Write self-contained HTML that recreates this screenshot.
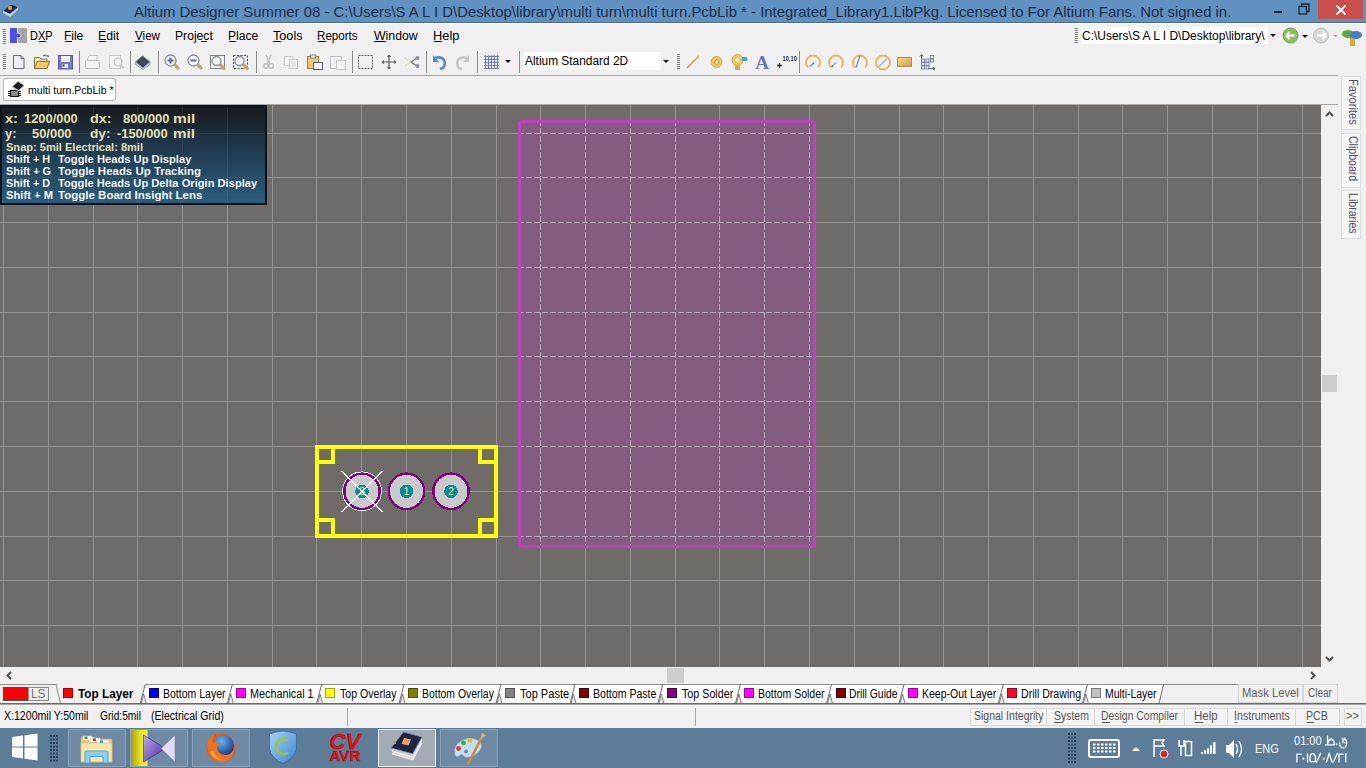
<!DOCTYPE html>
<html><head><meta charset="utf-8">
<style>
*{margin:0;padding:0;box-sizing:border-box}
html,body{width:1366px;height:768px;overflow:hidden;background:#f0f0f0;font-family:"Liberation Sans", sans-serif}
.a{position:absolute}
.t{position:absolute;white-space:nowrap;line-height:1}
.vt{position:absolute;left:1341px;width:20px;background:#f7f7f7;border:1px solid #dcdcdc}
</style></head><body>
<svg class="a" style="left:0;top:0" width="1366" height="768">
<defs>
<pattern id="hatch" patternUnits="userSpaceOnUse" width="5.657" height="8" patternTransform="rotate(-45)">
<rect x="0" y="0" width="6" height="8" fill="#6f6b69"/>
<rect x="0" y="0" width="2.9" height="8" fill="#964e96"/>
</pattern>
<linearGradient id="hudg" x1="0" y1="0" x2="0" y2="1">
<stop offset="0" stop-color="#18191b"/>
<stop offset="0.35" stop-color="#1e3446"/>
<stop offset="1" stop-color="#2b5d7d"/>
</linearGradient>
</defs>
<g shape-rendering="crispEdges">
<rect x="0" y="105" width="1321" height="562" fill="#6f6b69"/>
<rect x="518" y="120" width="298" height="428" fill="url(#hatch)"/>
<rect x="3" y="105" width="1" height="562" fill="#949190"/>
<rect x="48" y="105" width="1" height="562" fill="#949190"/>
<rect x="93" y="105" width="1" height="562" fill="#949190"/>
<rect x="137" y="105" width="1" height="562" fill="#949190"/>
<rect x="182" y="105" width="1" height="562" fill="#949190"/>
<rect x="227" y="105" width="1" height="562" fill="#949190"/>
<rect x="272" y="105" width="1" height="562" fill="#949190"/>
<rect x="316" y="105" width="1" height="562" fill="#949190"/>
<rect x="361" y="105" width="1" height="562" fill="#949190"/>
<rect x="406" y="105" width="1" height="562" fill="#949190"/>
<rect x="451" y="105" width="1" height="562" fill="#949190"/>
<rect x="496" y="105" width="1" height="562" fill="#949190"/>
<rect x="540" y="105" width="1" height="15" fill="#949190"/>
<line x1="540.5" y1="120" x2="540.5" y2="548" stroke="#b9a3b9" stroke-width="1" stroke-dasharray="6 2"/>
<rect x="540" y="548" width="1" height="119" fill="#949190"/>
<rect x="585" y="105" width="1" height="15" fill="#949190"/>
<line x1="585.5" y1="120" x2="585.5" y2="548" stroke="#b9a3b9" stroke-width="1" stroke-dasharray="6 2"/>
<rect x="585" y="548" width="1" height="119" fill="#949190"/>
<rect x="630" y="105" width="1" height="15" fill="#949190"/>
<line x1="630.5" y1="120" x2="630.5" y2="548" stroke="#b9a3b9" stroke-width="1" stroke-dasharray="6 2"/>
<rect x="630" y="548" width="1" height="119" fill="#949190"/>
<rect x="675" y="105" width="1" height="15" fill="#949190"/>
<line x1="675.5" y1="120" x2="675.5" y2="548" stroke="#b9a3b9" stroke-width="1" stroke-dasharray="6 2"/>
<rect x="675" y="548" width="1" height="119" fill="#949190"/>
<rect x="719" y="105" width="1" height="15" fill="#949190"/>
<line x1="719.5" y1="120" x2="719.5" y2="548" stroke="#b9a3b9" stroke-width="1" stroke-dasharray="6 2"/>
<rect x="719" y="548" width="1" height="119" fill="#949190"/>
<rect x="764" y="105" width="1" height="15" fill="#949190"/>
<line x1="764.5" y1="120" x2="764.5" y2="548" stroke="#b9a3b9" stroke-width="1" stroke-dasharray="6 2"/>
<rect x="764" y="548" width="1" height="119" fill="#949190"/>
<rect x="809" y="105" width="1" height="15" fill="#949190"/>
<line x1="809.5" y1="120" x2="809.5" y2="548" stroke="#b9a3b9" stroke-width="1" stroke-dasharray="6 2"/>
<rect x="809" y="548" width="1" height="119" fill="#949190"/>
<rect x="854" y="105" width="1" height="562" fill="#949190"/>
<rect x="899" y="105" width="1" height="562" fill="#949190"/>
<rect x="943" y="105" width="1" height="562" fill="#949190"/>
<rect x="988" y="105" width="1" height="562" fill="#949190"/>
<rect x="1033" y="105" width="1" height="562" fill="#949190"/>
<rect x="1078" y="105" width="1" height="562" fill="#949190"/>
<rect x="1122" y="105" width="1" height="562" fill="#949190"/>
<rect x="1167" y="105" width="1" height="562" fill="#949190"/>
<rect x="1212" y="105" width="1" height="562" fill="#949190"/>
<rect x="1257" y="105" width="1" height="562" fill="#949190"/>
<rect x="1302" y="105" width="1" height="562" fill="#949190"/>
<rect x="0" y="133" width="518" height="1" fill="#949190"/>
<line x1="518" y1="133.5" x2="816" y2="133.5" stroke="#b9a3b9" stroke-width="1" stroke-dasharray="6 2"/>
<rect x="816" y="133" width="505" height="1" fill="#949190"/>
<rect x="0" y="177" width="518" height="1" fill="#949190"/>
<line x1="518" y1="177.5" x2="816" y2="177.5" stroke="#b9a3b9" stroke-width="1" stroke-dasharray="6 2"/>
<rect x="816" y="177" width="505" height="1" fill="#949190"/>
<rect x="0" y="222" width="518" height="1" fill="#949190"/>
<line x1="518" y1="222.5" x2="816" y2="222.5" stroke="#b9a3b9" stroke-width="1" stroke-dasharray="6 2"/>
<rect x="816" y="222" width="505" height="1" fill="#949190"/>
<rect x="0" y="267" width="518" height="1" fill="#949190"/>
<line x1="518" y1="267.5" x2="816" y2="267.5" stroke="#b9a3b9" stroke-width="1" stroke-dasharray="6 2"/>
<rect x="816" y="267" width="505" height="1" fill="#949190"/>
<rect x="0" y="312" width="518" height="1" fill="#949190"/>
<line x1="518" y1="312.5" x2="816" y2="312.5" stroke="#b9a3b9" stroke-width="1" stroke-dasharray="6 2"/>
<rect x="816" y="312" width="505" height="1" fill="#949190"/>
<rect x="0" y="356" width="518" height="1" fill="#949190"/>
<line x1="518" y1="356.5" x2="816" y2="356.5" stroke="#b9a3b9" stroke-width="1" stroke-dasharray="6 2"/>
<rect x="816" y="356" width="505" height="1" fill="#949190"/>
<rect x="0" y="401" width="518" height="1" fill="#949190"/>
<line x1="518" y1="401.5" x2="816" y2="401.5" stroke="#b9a3b9" stroke-width="1" stroke-dasharray="6 2"/>
<rect x="816" y="401" width="505" height="1" fill="#949190"/>
<rect x="0" y="446" width="518" height="1" fill="#949190"/>
<line x1="518" y1="446.5" x2="816" y2="446.5" stroke="#b9a3b9" stroke-width="1" stroke-dasharray="6 2"/>
<rect x="816" y="446" width="505" height="1" fill="#949190"/>
<rect x="0" y="491" width="518" height="1" fill="#949190"/>
<line x1="518" y1="491.5" x2="816" y2="491.5" stroke="#b9a3b9" stroke-width="1" stroke-dasharray="6 2"/>
<rect x="816" y="491" width="505" height="1" fill="#949190"/>
<rect x="0" y="536" width="518" height="1" fill="#949190"/>
<line x1="518" y1="536.5" x2="816" y2="536.5" stroke="#b9a3b9" stroke-width="1" stroke-dasharray="6 2"/>
<rect x="816" y="536" width="505" height="1" fill="#949190"/>
<rect x="0" y="580" width="1321" height="1" fill="#949190"/>
<rect x="0" y="625" width="1321" height="1" fill="#949190"/>
<rect x="519.5" y="121.5" width="295" height="425" rx="2" fill="none" stroke="#c23ec2" stroke-width="3"/>
<g fill="#ffff00"><rect x="315" y="445" width="183" height="4"/><rect x="315" y="534" width="183" height="4"/><rect x="315" y="445" width="4" height="93"/><rect x="494" y="445" width="4" height="93"/><rect x="331" y="445" width="4" height="19"/><rect x="315" y="460" width="20" height="4"/><rect x="478" y="445" width="4" height="19"/><rect x="478" y="460" width="20" height="4"/><rect x="331" y="518" width="4" height="20"/><rect x="315" y="518" width="20" height="4"/><rect x="478" y="518" width="4" height="20"/><rect x="478" y="518" width="20" height="4"/></g>
<circle cx="362" cy="491.3" r="19.3" fill="none" stroke="#ffffff" stroke-width="1.2"/>
<circle cx="362" cy="491.3" r="17.7" fill="#c9c8ca" stroke="#800080" stroke-width="2.4"/>
<circle cx="362" cy="491.3" r="6.8" fill="#0c8c90"/>
<text x="362" y="494.90000000000003" font-family="Liberation Sans" font-size="10" fill="#e6f0b0" text-anchor="middle">3</text>
<g stroke="#ffffff" stroke-width="1.1"><line x1="341.5" y1="470.8" x2="382.5" y2="511.8"/><line x1="382.5" y1="470.8" x2="341.5" y2="511.8"/></g>
<circle cx="406.5" cy="491.3" r="17.7" fill="#c9c8ca" stroke="#800080" stroke-width="2.4"/>
<circle cx="406.5" cy="491.3" r="6.8" fill="#0c8c90"/>
<text x="406.5" y="494.90000000000003" font-family="Liberation Sans" font-size="10" fill="#e6f0b0" text-anchor="middle">1</text>
<circle cx="451" cy="491.3" r="17.7" fill="#c9c8ca" stroke="#800080" stroke-width="2.4"/>
<circle cx="451" cy="491.3" r="6.8" fill="#0c8c90"/>
<text x="451" y="494.90000000000003" font-family="Liberation Sans" font-size="10" fill="#e6f0b0" text-anchor="middle">2</text>
</g>
</svg>

<svg class="a" style="left:0;top:105px" width="267" height="100">
<rect x="0" y="0" width="267" height="100" fill="#0b141c"/>
<rect x="2" y="2" width="263" height="96" fill="url(#hudg)"/><g fill="#ffffff" opacity="0.07"><rect x="48" y="2" width="1" height="96"/><rect x="93" y="2" width="1" height="96"/><rect x="137" y="2" width="1" height="96"/><rect x="182" y="2" width="1" height="96"/><rect x="227" y="2" width="1" height="96"/><rect x="2" y="28" width="263" height="1"/><rect x="2" y="72" width="263" height="1"/></g>
</svg>
<div class="t" style="left:4.79px;top:111.79px;font-size:13px;color:#e4e0b4;font-weight:bold;transform:scaleX(1.1171);transform-origin:0 0;">x:</div>
<div class="t" style="left:24.39px;top:111.79px;font-size:13px;color:#e4e0b4;font-weight:bold;transform:scaleX(0.9910);transform-origin:0 0;">1200/000</div>
<div class="t" style="left:90.32px;top:111.79px;font-size:13px;color:#e4e0b4;font-weight:bold;transform:scaleX(1.1102);transform-origin:0 0;">dx:</div>
<div class="t" style="left:122.58px;top:111.79px;font-size:13px;color:#e4e0b4;font-weight:bold;transform:scaleX(0.9865);transform-origin:0 0;">800/000</div>
<div class="t" style="left:172.90px;top:111.79px;font-size:13px;color:#e4e0b4;font-weight:bold;transform:scaleX(1.1861);transform-origin:0 0;">mil</div>
<div class="t" style="left:4.80px;top:126.59px;font-size:13px;color:#e4e0b4;font-weight:bold;transform:scaleX(0.9897);transform-origin:0 0;">y:</div>
<div class="t" style="left:31.71px;top:126.59px;font-size:13px;color:#e4e0b4;font-weight:bold;transform:scaleX(0.9939);transform-origin:0 0;">50/000</div>
<div class="t" style="left:90.45px;top:126.59px;font-size:13px;color:#e4e0b4;font-weight:bold;transform:scaleX(1.0482);transform-origin:0 0;">dy:</div>
<div class="t" style="left:117.49px;top:126.59px;font-size:13px;color:#e4e0b4;font-weight:bold;transform:scaleX(0.9845);transform-origin:0 0;">-150/000</div>
<div class="t" style="left:173.01px;top:126.59px;font-size:13px;color:#e4e0b4;font-weight:bold;transform:scaleX(1.1744);transform-origin:0 0;">mil</div>
<div class="t" style="left:5.57px;top:141.81px;font-size:10.5px;color:#e4e0b4;font-weight:bold;transform:scaleX(1.0529);transform-origin:0 0;">Snap: 5mil Electrical: 8mil</div>
<div class="t" style="left:5.58px;top:154.09px;font-size:11px;color:#f4f4f4;font-weight:bold;transform:scaleX(0.9803);transform-origin:0 0;">Shift + H</div>
<div class="t" style="left:57.69px;top:154.09px;font-size:11px;color:#f4f4f4;font-weight:bold;transform:scaleX(1.0165);transform-origin:0 0;">Toggle Heads Up Display</div>
<div class="t" style="left:5.57px;top:165.99px;font-size:11px;color:#f4f4f4;font-weight:bold;transform:scaleX(0.9883);transform-origin:0 0;">Shift + G</div>
<div class="t" style="left:57.69px;top:165.99px;font-size:11px;color:#f4f4f4;font-weight:bold;transform:scaleX(1.0412);transform-origin:0 0;">Toggle Heads Up Tracking</div>
<div class="t" style="left:5.58px;top:177.89px;font-size:11px;color:#f4f4f4;font-weight:bold;transform:scaleX(0.9788);transform-origin:0 0;">Shift + D</div>
<div class="t" style="left:57.69px;top:177.89px;font-size:11px;color:#f4f4f4;font-weight:bold;transform:scaleX(1.0131);transform-origin:0 0;">Toggle Heads Up Delta Origin Display</div>
<div class="t" style="left:5.56px;top:189.69px;font-size:11px;color:#f4f4f4;font-weight:bold;transform:scaleX(1.0200);transform-origin:0 0;">Shift + M</div>
<div class="t" style="left:57.68px;top:189.69px;font-size:11px;color:#f4f4f4;font-weight:bold;transform:scaleX(1.0469);transform-origin:0 0;">Toggle Board Insight Lens</div>

<div class="a" style="left:0;top:0;width:1366px;height:22px;background:#6191c1"></div>
<div class="a" style="left:0;top:22px;width:1366px;height:1px;background:#4f6d8c"></div><div class="a" style="left:0;top:23px;width:1366px;height:1px;background:#f8fafc"></div>
<svg class="a" style="left:0;top:0" width="22" height="22"><path d="M3 11l8 -7 7 3 -8 7z" fill="#1c2440" stroke="#8890a0" stroke-width="0.8"/><circle cx="10" cy="8" r="2" fill="#e8a860"/><path d="M3 11v2l7 4 8 -7v-2l-8 6z" fill="#c8ccd4"/></svg>
<div class="a" style="left:1274px;top:11px;width:8px;height:2px;background:#1a2838"></div>
<svg class="a" style="left:1298px;top:3px" width="12" height="12"><rect x="1" y="3.5" width="7.5" height="7.5" fill="none" stroke="#1a2838" stroke-width="1.3"/><path d="M3.5 3v-2h7.5v7.5h-2" fill="none" stroke="#1a2838" stroke-width="1.3"/></svg>
<div class="a" style="left:1318px;top:0;width:45px;height:19px;background:#c94f4f"></div>
<svg class="a" style="left:1335px;top:4px" width="12" height="12"><path d="M1.5 1.5l9 9M10.5 1.5l-9 9" stroke="#fff" stroke-width="1.8"/></svg>

<svg class="a" style="left:0;top:0" width="1366" height="110">
<rect x="3" y="29" width="3" height="1" fill="#7a7a7a"/><rect x="3" y="31" width="3" height="1" fill="#7a7a7a"/><rect x="3" y="33" width="3" height="1" fill="#7a7a7a"/><rect x="3" y="35" width="3" height="1" fill="#7a7a7a"/><rect x="3" y="37" width="3" height="1" fill="#7a7a7a"/><rect x="3" y="39" width="3" height="1" fill="#7a7a7a"/><rect x="3" y="41" width="3" height="1" fill="#7a7a7a"/><rect x="3" y="43" width="3" height="1" fill="#7a7a7a"/>
<rect x="18" y="28" width="9" height="15" fill="#a4a4a4"/><rect x="10" y="28" width="7" height="15" fill="#5050e8"/><circle cx="18.5" cy="35.5" r="2.4" fill="#5050e8" stroke="#f0f0ff" stroke-width="0.8"/><rect x="15" y="33.5" width="3" height="4" fill="#5050e8"/>
<rect x="3" y="54" width="3" height="1" fill="#7a7a7a"/><rect x="3" y="56" width="3" height="1" fill="#7a7a7a"/><rect x="3" y="58" width="3" height="1" fill="#7a7a7a"/><rect x="3" y="60" width="3" height="1" fill="#7a7a7a"/><rect x="3" y="62" width="3" height="1" fill="#7a7a7a"/><rect x="3" y="64" width="3" height="1" fill="#7a7a7a"/><rect x="3" y="66" width="3" height="1" fill="#7a7a7a"/><rect x="3" y="68" width="3" height="1" fill="#7a7a7a"/>
<path d="M13.5 55.5h7.5l3 3v10h-10.5z" fill="#eef0f6" stroke="#6a6a70" stroke-width="1"/><path d="M21 55.5v3h3" fill="none" stroke="#6a6a70"/>
<path d="M34.5 57.5h5l1.5 1.5h6v9.5h-12.5z" fill="#efe2a8" stroke="#8a7a50"/><path d="M37 61.5h12.5l-2.5 7h-12.5z" fill="#f2c860" stroke="#8a7040"/><path d="M43 56q3 -2 6 1" fill="none" stroke="#7a7aa8" stroke-width="1.5"/>
<rect x="58.5" y="55.5" width="14" height="13.5" fill="#7878c8" stroke="#5858a0"/><rect x="61" y="56" width="9" height="6" fill="#eceef8"/><rect x="62" y="64" width="6" height="4" fill="#e8e8f0"/><rect x="62.5" y="64.5" width="2" height="2" fill="#303050"/>
<rect x="79" y="51" width="1" height="22" fill="#8a8a8a"/>
<path d="M89 55.5h9l-2 5h-9z" fill="#f4f4f4" stroke="#c4c4c4"/><rect x="85.5" y="60.5" width="14" height="8" rx="1" fill="#f2f2f2" stroke="#bdbdbd"/>
<rect x="109.5" y="55.5" width="11" height="13" fill="#f6f6f6" stroke="#c8c8c8"/><circle cx="118" cy="62" r="4" fill="#f0f0f0" stroke="#c0c0c0" stroke-width="1.2"/><path d="M120.5 65l3 3" stroke="#c8c8c8" stroke-width="2"/>
<rect x="130" y="51" width="1" height="22" fill="#8a8a8a"/>
<path d="M135.5 62l7 -6 7.5 6 -7 6z" fill="#3a4250" stroke="#707a88"/><path d="M135.5 62v2.5l7.5 5 7 -5v-2.5l-7 6z" fill="#c8d0dc" stroke="#9aa4b0"/><path d="M139 60l6 4M141 58.5l6 4" stroke="#566070" stroke-width="0.8"/>
<rect x="158" y="51" width="1" height="22" fill="#8a8a8a"/>
<path d="M173.5 63.5l4.5 4.5" stroke="#c8a868" stroke-width="3.2" stroke-linecap="round"/><circle cx="170.5" cy="60.5" r="5.5" fill="#f4f6fa" stroke="#8a8e96" stroke-width="1.3"/><path d="M167.5 60.5h6M170.5 57.5v6" stroke="#5c6e9c" stroke-width="2"/>
<path d="M196.5 63.5l4.5 4.5" stroke="#c8a868" stroke-width="3.2" stroke-linecap="round"/><circle cx="193.5" cy="60.5" r="5.5" fill="#f4f6fa" stroke="#8a8e96" stroke-width="1.3"/><path d="M190.5 60.5h6" stroke="#5c6e9c" stroke-width="2"/>
<rect x="210.5" y="55.5" width="14" height="13" fill="#fbfbfb" stroke="#7c8088"/><path d="M219.5 64l4.5 4.5" stroke="#c8a868" stroke-width="3.2" stroke-linecap="round"/><circle cx="216.5" cy="61" r="4.5" fill="#f4f6fa" stroke="#8a8e96" stroke-width="1.3"/>
<rect x="233.5" y="55.5" width="14" height="13" fill="none" stroke="#404040" stroke-dasharray="2 1.5"/><path d="M242.5 64l4.5 4.5" stroke="#c8a868" stroke-width="3.2" stroke-linecap="round"/><circle cx="239.5" cy="61" r="4.5" fill="#f4f6fa" stroke="#8a8e96" stroke-width="1.3"/>
<rect x="256" y="51" width="1" height="22" fill="#8a8a8a"/>
<path d="M266 55l4 9M271 55l-4 9" stroke="#c4c4c4" stroke-width="1.6"/><circle cx="266" cy="66" r="2.3" fill="none" stroke="#c0c0c0" stroke-width="1.4"/><circle cx="271" cy="66" r="2.3" fill="none" stroke="#c0c0c0" stroke-width="1.4"/>
<rect x="284.5" y="56.5" width="8" height="9" fill="#f8f8f8" stroke="#c8c8c8"/><rect x="289.5" y="59.5" width="8" height="9" fill="#f8f8f8" stroke="#c4c4c4"/><path d="M291 62h5M291 64h5M291 66h5" stroke="#d0d0d0"/>
<rect x="307.5" y="56.5" width="11" height="12" fill="#e8c878" stroke="#a08040"/><rect x="310.5" y="55" width="5" height="3" fill="#f0f0f0" stroke="#808080"/><rect x="313.5" y="62.5" width="9" height="7" fill="#f4f4f8" stroke="#5a6070"/>
<rect x="330.5" y="56.5" width="11" height="12" fill="#f0f0f0" stroke="#c0c0c0"/><rect x="336.5" y="60.5" width="9" height="9" fill="#f6f6f6" stroke="#c4c4c4"/>
<rect x="352" y="51" width="1" height="22" fill="#8a8a8a"/>
<rect x="358.5" y="55.5" width="14" height="13" fill="none" stroke="#606060" stroke-dasharray="2 1"/>
<path d="M389 55v14M382 62h14" stroke="#5a5a5a" stroke-width="1.2"/><path d="M389 54.5l-2 2.5h4zM389 69.5l-2 -2.5h4zM381.5 62l2.5 -2v4zM396.5 62l-2.5 -2v4z" fill="#5a5a5a"/>
<path d="M405 58l6 4 -6 4" fill="none" stroke="#e8d870" stroke-width="1.2" stroke-dasharray="1.5 1"/><path d="M411 62l6 -4M411 62l6 4" stroke="#6a7080" stroke-width="1.3"/><circle cx="417.5" cy="58" r="2" fill="#8890a0"/><circle cx="417.5" cy="66" r="2" fill="#8890a0"/>
<rect x="426" y="51" width="1" height="22" fill="#8a8a8a"/>
<path d="M435 58q6 -2 9 2q2 4 -1 8l-3 1" fill="none" stroke="#5a88d0" stroke-width="2.6"/><path d="M433 55v7h6z" fill="#5a88d0"/>
<path d="M467 58q-6 -2 -9 2q-2 4 1 8l3 1" fill="none" stroke="#c8c8c8" stroke-width="2.6"/><path d="M469 55v7h-6z" fill="#c8c8c8"/>
<rect x="477" y="51" width="1" height="22" fill="#8a8a8a"/>
<rect x="485" y="55" width="1" height="14" fill="#6e7ec8"/><rect x="484" y="56" width="15" height="1" fill="#6e7ec8"/><rect x="488" y="55" width="1" height="14" fill="#6e7ec8"/><rect x="484" y="59" width="15" height="1" fill="#6e7ec8"/><rect x="491" y="55" width="1" height="14" fill="#6e7ec8"/><rect x="484" y="62" width="15" height="1" fill="#6e7ec8"/><rect x="494" y="55" width="1" height="14" fill="#6e7ec8"/><rect x="484" y="65" width="15" height="1" fill="#6e7ec8"/><rect x="497" y="55" width="1" height="14" fill="#6e7ec8"/><rect x="484" y="68" width="15" height="1" fill="#6e7ec8"/>
<path d="M505 60h6l-3 3z" fill="#101010"/>
<rect x="519" y="51" width="1" height="22" fill="#8a8a8a"/>
<rect x="523" y="52" width="148" height="18" fill="#ffffff"/><rect x="661" y="52" width="10" height="18" fill="#f0f0f0"/>
<path d="M663 60h6l-3 3z" fill="#101010"/>
<rect x="677" y="54" width="3" height="1" fill="#7a7a7a"/><rect x="677" y="56" width="3" height="1" fill="#7a7a7a"/><rect x="677" y="58" width="3" height="1" fill="#7a7a7a"/><rect x="677" y="60" width="3" height="1" fill="#7a7a7a"/><rect x="677" y="62" width="3" height="1" fill="#7a7a7a"/><rect x="677" y="64" width="3" height="1" fill="#7a7a7a"/><rect x="677" y="66" width="3" height="1" fill="#7a7a7a"/><rect x="677" y="68" width="3" height="1" fill="#7a7a7a"/>
<path d="M687 68l12 -12" stroke="#d8b060" stroke-width="1.8"/>
<circle cx="716.5" cy="62" r="5.5" fill="#f0c860" stroke="#d8a848"/><circle cx="716.5" cy="62" r="2.3" fill="#f8f0d8" stroke="#c89838"/>
<rect x="735" y="63" width="5" height="7" fill="#e0a848"/><circle cx="737.5" cy="60" r="5.5" fill="#f0c860" stroke="#d8a848"/><circle cx="737.5" cy="60" r="2" fill="#f8f0d8"/><rect x="742" y="57" width="5" height="4" fill="#48a8c8"/>
<text x="762" y="69" font-family="Liberation Serif" font-weight="bold" font-size="19" fill="#6278b0" text-anchor="middle">A</text>
<path d="M777 65.5h5M779.5 63v5" stroke="#303030" stroke-width="1.3"/><text x="782.5" y="61.5" font-family="Liberation Sans" font-weight="bold" font-size="7" fill="#303030" transform="translate(782.5 61.5) scale(0.82 1) translate(-782.5 -61.5)">10,10</text>
<rect x="799" y="51" width="1" height="22" fill="#8a8a8a"/>
<path d="M808.0503 67.4497A7 7 0 1 1 817.9497 67.4497" fill="none" stroke="#e2b868" stroke-width="1.9"/><path d="M809.5 66.5l4 -3" stroke="#4a68b0" stroke-width="1"/><circle cx="813.5" cy="63.5" r="0.9" fill="#4a68b0"/>
<path d="M831.0503 67.4497A7 7 0 1 1 840.9497 67.4497" fill="none" stroke="#e2b868" stroke-width="1.9"/><path d="M832 66.5l4 -4" stroke="#4a68b0" stroke-width="1"/><circle cx="832.2" cy="66.3" r="0.9" fill="#4a68b0"/>
<path d="M855.0503 67.4497A7 7 0 1 1 864.9497 67.4497" fill="none" stroke="#e2b868" stroke-width="1.9"/><path d="M856 67.5l4 -12" stroke="#4a68b0" stroke-width="1"/>
<circle cx="883" cy="62.5" r="7" fill="none" stroke="#e2b868" stroke-width="1.9"/><path d="M879 66.5l8 -8" stroke="#6a78b0" stroke-width="1"/>
<defs><linearGradient id="fg" x1="0" y1="0" x2="1" y2="1"><stop offset="0" stop-color="#f8e070"/><stop offset="1" stop-color="#c89860"/></linearGradient></defs><rect x="897.5" y="57.5" width="14" height="9" fill="url(#fg)" stroke="#b89050"/>
<path d="M921.5 61v-6M920 56.5l1.5 -2 1.5 2M928 68.5h7M933 67l2 1.5 -2 1.5" stroke="#5a6070" fill="none"/><rect x="921.5" y="59.0" width="3" height="3" fill="none" stroke="#7880a0" stroke-width="0.9"/><rect x="926.0" y="59.0" width="3" height="3" fill="none" stroke="#7880a0" stroke-width="0.9"/><rect x="930.5" y="55.5" width="3" height="3" fill="none" stroke="#7880a0" stroke-width="0.9"/><rect x="921.5" y="62.5" width="3" height="3" fill="none" stroke="#7880a0" stroke-width="0.9"/><rect x="926.0" y="62.5" width="3" height="3" fill="none" stroke="#7880a0" stroke-width="0.9"/><rect x="930.5" y="59.0" width="3" height="3" fill="none" stroke="#7880a0" stroke-width="0.9"/><rect x="921.5" y="66.0" width="3" height="3" fill="none" stroke="#7880a0" stroke-width="0.9"/><rect x="926.0" y="66.0" width="3" height="3" fill="none" stroke="#7880a0" stroke-width="0.9"/>
<rect x="1075" y="28" width="3" height="1" fill="#7a7a7a"/><rect x="1075" y="30" width="3" height="1" fill="#7a7a7a"/><rect x="1075" y="32" width="3" height="1" fill="#7a7a7a"/><rect x="1075" y="34" width="3" height="1" fill="#7a7a7a"/><rect x="1075" y="36" width="3" height="1" fill="#7a7a7a"/><rect x="1075" y="38" width="3" height="1" fill="#7a7a7a"/><rect x="1075" y="40" width="3" height="1" fill="#7a7a7a"/><rect x="1075" y="42" width="3" height="1" fill="#7a7a7a"/>
<rect x="1081" y="27" width="196" height="17" fill="#ffffff"/><rect x="1268" y="27" width="9" height="17" fill="#f0f0f0"/>
<path d="M1270 34h6l-3 3z" fill="#101010"/>
<circle cx="1290.5" cy="35.5" r="7.5" fill="#8cc060" stroke="#6a9a48"/><path d="M1286 35.5h9M1286 35.5l3.5 -3.5M1286 35.5l3.5 3.5" stroke="#fff" stroke-width="2"/>
<path d="M1302 35h6l-3 3z" fill="#101010"/>
<circle cx="1321" cy="35.5" r="7.5" fill="#d8d8d8" stroke="#c0c0c0"/><path d="M1317 35.5h9M1326 35.5l-3.5 -3.5M1326 35.5l-3.5 3.5" stroke="#fff" stroke-width="2"/>
<path d="M1333 35h5l-2.5 2.5z" fill="#b0b0b0"/>
<rect x="1350" y="37" width="5" height="9" fill="#e0a830"/><ellipse cx="1348" cy="34" rx="6" ry="4" fill="#60a840"/><ellipse cx="1356" cy="35" rx="6" ry="4" fill="#4878d8"/>
<rect x="39" y="41" width="7" height="1" fill="#000"/>
<rect x="65" y="41" width="7" height="1" fill="#000"/>
<rect x="99" y="41" width="7" height="1" fill="#000"/>
<rect x="135" y="41" width="8" height="1" fill="#000"/>
<rect x="201" y="41" width="6" height="1" fill="#000"/>
<rect x="229" y="41" width="7" height="1" fill="#000"/>
<rect x="273" y="41" width="8" height="1" fill="#000"/>
<rect x="318" y="41" width="8" height="1" fill="#000"/>
<rect x="374" y="41" width="12" height="1" fill="#000"/>
<rect x="434" y="41" width="8" height="1" fill="#000"/>
</svg>
<div class="t" style="left:134.16px;top:4.00px;font-size:15px;color:#1b2e48;transform:scaleX(0.9931);transform-origin:0 0;">Altium Designer Summer 08 - C:\Users\S A L I D\Desktop\library\multi turn\multi turn.PcbLib * - Integrated_Library1.LibPkg. Licensed to For Altium Fans. Not signed in.</div><div class="t" style="left:30.39px;top:29.52px;font-size:12.5px;color:#000;transform:scaleX(0.8780);transform-origin:0 0;">DXP</div><div class="t" style="left:64.42px;top:29.52px;font-size:12.5px;color:#000;transform:scaleX(0.9535);transform-origin:0 0;">File</div><div class="t" style="left:97.99px;top:29.52px;font-size:12.5px;color:#000;transform:scaleX(0.9801);transform-origin:0 0;">Edit</div><div class="t" style="left:134.94px;top:29.52px;font-size:12.5px;color:#000;transform:scaleX(0.9313);transform-origin:0 0;">View</div><div class="t" style="left:175.30px;top:29.52px;font-size:12.5px;color:#000;transform:scaleX(0.9714);transform-origin:0 0;">Project</div><div class="t" style="left:227.80px;top:29.52px;font-size:12.5px;color:#000;transform:scaleX(0.9667);transform-origin:0 0;">Place</div><div class="t" style="left:272.72px;top:29.52px;font-size:12.5px;color:#000;transform:scaleX(1.0116);transform-origin:0 0;">Tools</div><div class="t" style="left:317.34px;top:29.52px;font-size:12.5px;color:#000;transform:scaleX(0.9288);transform-origin:0 0;">Reports</div><div class="t" style="left:374.24px;top:29.52px;font-size:12.5px;color:#000;transform:scaleX(0.9834);transform-origin:0 0;">Window</div><div class="t" style="left:432.94px;top:29.52px;font-size:12.5px;color:#000;transform:scaleX(1.0266);transform-origin:0 0;">Help</div><div class="t" style="left:1082.40px;top:30.12px;font-size:12.5px;color:#000;transform:scaleX(0.9582);transform-origin:0 0;">C:\Users\S A L I D\Desktop\library\</div><div class="t" style="left:524.97px;top:55.42px;font-size:12.5px;color:#000;transform:scaleX(0.9519);transform-origin:0 0;">Altium Standard 2D</div><div class="t" style="left:27.79px;top:84.59px;font-size:11px;color:#000;transform:scaleX(0.9589);transform-origin:0 0;">multi turn.PcbLib *</div>

<div class="a" style="left:0;top:75px;width:1338px;height:1px;background:#a9a9a9"></div>
<div class="a" style="left:3px;top:78px;width:113px;height:23px;background:#fff;border:1px solid #b4b4b4;border-radius:2px"></div>
<svg class="a" style="left:0;top:76px" width="30" height="26"><path d="M8 15.5h3M8 17.5h3M8 19.5h3M18 15.5h3M18 17.5h3M18 19.5h3" stroke="#202020"/><rect x="10.5" y="14.5" width="8" height="6" fill="#888" stroke="#151515"/><path d="M12.5 10.5l5.5 -5 6 4 -5.5 5z" fill="#1a1a1a" stroke="#a8a8a8" stroke-width="0.9"/><path d="M12.5 10.5l1 2.5 5.5 1.5" fill="none" stroke="#c8c8c8"/></svg>
<div class="t" style="left:27.79px;top:84.59px;font-size:11px;color:#000;transform:scaleX(0.9589);transform-origin:0 0;">multi turn.PcbLib *</div>
<div class="a" style="left:0;top:104px;width:1338px;height:1px;background:#a9a9a9"></div>

<div class="a" style="left:1321px;top:105px;width:17px;height:562px;background:#f0f0f0"></div>
<svg class="a" style="left:1321px;top:105px" width="17" height="562">
<path d="M5 11l3.5 -3.5 3.5 3.5" fill="none" stroke="#505050" stroke-width="2"/>
<rect x="1" y="270" width="15" height="17" fill="#cdcdcd"/>
<path d="M5 552l3.5 3.5 3.5 -3.5" fill="none" stroke="#505050" stroke-width="2"/>
</svg>
<svg class="a" style="left:0;top:667px" width="1338" height="17">
<path d="M11 5l-3.5 3.5 3.5 3.5" fill="none" stroke="#505050" stroke-width="2"/>
<rect x="667" y="1" width="17" height="15" fill="#cdcdcd"/>
<path d="M1311 5l3.5 3.5 -3.5 3.5" fill="none" stroke="#505050" stroke-width="2"/>
</svg>

<div class="vt" style="top:76px;height:54px"></div>
<div class="t" style="left:1358.58px;top:78.88px;font-size:12.5px;color:#505064;transform-origin:0 0;transform:rotate(90deg) scaleX(0.8931)">Favorites</div>
<div class="vt" style="top:133px;height:55px"></div>
<div class="t" style="left:1358.58px;top:136.47px;font-size:12.5px;color:#505064;transform-origin:0 0;transform:rotate(90deg) scaleX(0.8446)">Clipboard</div>
<div class="vt" style="top:190px;height:49px"></div>
<div class="t" style="left:1358.58px;top:192.73px;font-size:12.5px;color:#505064;transform-origin:0 0;transform:rotate(90deg) scaleX(0.8479)">Libraries</div>
<div class="a" style="left:0;top:684px;width:1366px;height:20px;background:#f0f0f0"></div>
<svg class="a" style="left:0;top:680px" width="1366" height="26">
<path d="M140.5 23.5L145.5 4.5H1163.5L1159 23.5Z" fill="#ffffff"/>
<rect x="0" y="4" width="1238" height="1" fill="#8e8e8e"/>
<rect x="57" y="4" width="88" height="1" fill="#f0f0f0"/>
<path d="M56 4.5l4.5 19" stroke="#8e8e8e" fill="none"/>
<path d="M145.2 4.5L140.2 23.5" stroke="#707070" fill="none"/>
<path d="M141.2 23.5L143.7 14L146.2 23.5z" fill="#ececec" stroke="#707070" stroke-width="0.9"/>
<path d="M232.3 4.5L227.3 23.5" stroke="#707070" fill="none"/>
<path d="M228.3 23.5L230.8 14L233.3 23.5z" fill="#ececec" stroke="#707070" stroke-width="0.9"/>
<path d="M321.6 4.5L316.6 23.5" stroke="#707070" fill="none"/>
<path d="M317.6 23.5L320.1 14L322.6 23.5z" fill="#ececec" stroke="#707070" stroke-width="0.9"/>
<path d="M404 4.5L399 23.5" stroke="#707070" fill="none"/>
<path d="M400 23.5L402.5 14L405 23.5z" fill="#ececec" stroke="#707070" stroke-width="0.9"/>
<path d="M501 4.5L496 23.5" stroke="#707070" fill="none"/>
<path d="M497 23.5L499.5 14L502 23.5z" fill="#ececec" stroke="#707070" stroke-width="0.9"/>
<path d="M575 4.5L570 23.5" stroke="#707070" fill="none"/>
<path d="M571 23.5L573.5 14L576 23.5z" fill="#ececec" stroke="#707070" stroke-width="0.9"/>
<path d="M662.8 4.5L657.8 23.5" stroke="#707070" fill="none"/>
<path d="M658.8 23.5L661.3 14L663.8 23.5z" fill="#ececec" stroke="#707070" stroke-width="0.9"/>
<path d="M740.4 4.5L735.4 23.5" stroke="#707070" fill="none"/>
<path d="M736.4 23.5L738.9 14L741.4 23.5z" fill="#ececec" stroke="#707070" stroke-width="0.9"/>
<path d="M831.5 4.5L826.5 23.5" stroke="#707070" fill="none"/>
<path d="M827.5 23.5L830.0 14L832.5 23.5z" fill="#ececec" stroke="#707070" stroke-width="0.9"/>
<path d="M904 4.5L899 23.5" stroke="#707070" fill="none"/>
<path d="M900 23.5L902.5 14L905 23.5z" fill="#ececec" stroke="#707070" stroke-width="0.9"/>
<path d="M1003.2 4.5L998.2 23.5" stroke="#707070" fill="none"/>
<path d="M999.2 23.5L1001.7 14L1004.2 23.5z" fill="#ececec" stroke="#707070" stroke-width="0.9"/>
<path d="M1087.4 4.5L1082.4 23.5" stroke="#707070" fill="none"/>
<path d="M1083.4 23.5L1085.9 14L1088.4 23.5z" fill="#ececec" stroke="#707070" stroke-width="0.9"/>
<path d="M1163.5 4.5L1159 23.5" stroke="#707070" fill="none"/>
<rect x="0" y="23" width="1366" height="1" fill="#6a6a6a"/><rect x="0" y="24" width="1366" height="1" fill="#a8a8a8"/>
</svg>
<div class="a" style="left:3px;top:687px;width:26px;height:14px;background:#ff0000;border:1px solid #505050"></div>
<div class="a" style="left:28px;top:687px;width:21px;height:14px;border:1px solid #8a8a8a"></div>
<div class="t" style="left:31.02px;top:688.34px;font-size:12px;color:#707070;transform:scaleX(0.9893);transform-origin:0 0;">LS</div>
<div class="a" style="left:63.0px;top:688px;width:10px;height:10px;background:#ff0000;box-shadow:inset 0 0 0 1px rgba(0,0,0,0.35)"></div>
<div class="t" style="left:78.48px;top:687.64px;font-size:12px;color:#000;font-weight:bold;transform:scaleX(0.9811);transform-origin:0 0;">Top Layer</div>
<div class="a" style="left:149.3px;top:688px;width:10px;height:10px;background:#0000ff;box-shadow:inset 0 0 0 1px rgba(0,0,0,0.35)"></div>
<div class="t" style="left:162.63px;top:687.64px;font-size:12px;color:#000;transform:scaleX(0.8761);transform-origin:0 0;">Bottom Layer</div>
<div class="a" style="left:236.0px;top:688px;width:10px;height:10px;background:#ff00ff;box-shadow:inset 0 0 0 1px rgba(0,0,0,0.35)"></div>
<div class="t" style="left:249.71px;top:687.64px;font-size:12px;color:#000;transform:scaleX(0.8999);transform-origin:0 0;">Mechanical 1</div>
<div class="a" style="left:325.3px;top:688px;width:10px;height:10px;background:#ffff00;box-shadow:inset 0 0 0 1px rgba(0,0,0,0.35)"></div>
<div class="t" style="left:340.46px;top:687.64px;font-size:12px;color:#000;transform:scaleX(0.8836);transform-origin:0 0;">Top Overlay</div>
<div class="a" style="left:408.0px;top:688px;width:10px;height:10px;background:#808000;box-shadow:inset 0 0 0 1px rgba(0,0,0,0.35)"></div>
<div class="t" style="left:421.84px;top:687.64px;font-size:12px;color:#000;transform:scaleX(0.8691);transform-origin:0 0;">Bottom Overlay</div>
<div class="a" style="left:505.1px;top:688px;width:10px;height:10px;background:#808080;box-shadow:inset 0 0 0 1px rgba(0,0,0,0.35)"></div>
<div class="t" style="left:519.75px;top:687.64px;font-size:12px;color:#000;transform:scaleX(0.9203);transform-origin:0 0;">Top Paste</div>
<div class="a" style="left:579.4px;top:688px;width:10px;height:10px;background:#800000;box-shadow:inset 0 0 0 1px rgba(0,0,0,0.35)"></div>
<div class="t" style="left:592.83px;top:687.64px;font-size:12px;color:#000;transform:scaleX(0.8805);transform-origin:0 0;">Bottom Paste</div>
<div class="a" style="left:667.2px;top:688px;width:10px;height:10px;background:#800080;box-shadow:inset 0 0 0 1px rgba(0,0,0,0.35)"></div>
<div class="t" style="left:682.06px;top:687.64px;font-size:12px;color:#000;transform:scaleX(0.8926);transform-origin:0 0;">Top Solder</div>
<div class="a" style="left:744.1px;top:688px;width:10px;height:10px;background:#ff00ff;box-shadow:inset 0 0 0 1px rgba(0,0,0,0.35)"></div>
<div class="t" style="left:757.83px;top:687.64px;font-size:12px;color:#000;transform:scaleX(0.8751);transform-origin:0 0;">Bottom Solder</div>
<div class="a" style="left:835.5px;top:688px;width:10px;height:10px;background:#800000;box-shadow:inset 0 0 0 1px rgba(0,0,0,0.35)"></div>
<div class="t" style="left:848.94px;top:687.64px;font-size:12px;color:#000;transform:scaleX(0.8659);transform-origin:0 0;">Drill Guide</div>
<div class="a" style="left:908.0px;top:688px;width:10px;height:10px;background:#ff00ff;box-shadow:inset 0 0 0 1px rgba(0,0,0,0.35)"></div>
<div class="t" style="left:921.83px;top:687.64px;font-size:12px;color:#000;transform:scaleX(0.8761);transform-origin:0 0;">Keep-Out Layer</div>
<div class="a" style="left:1007.3px;top:688px;width:10px;height:10px;background:#ff0028;box-shadow:inset 0 0 0 1px rgba(0,0,0,0.35)"></div>
<div class="t" style="left:1020.63px;top:687.64px;font-size:12px;color:#000;transform:scaleX(0.8828);transform-origin:0 0;">Drill Drawing</div>
<div class="a" style="left:1091.0px;top:688px;width:10px;height:10px;background:#c0c0c0;box-shadow:inset 0 0 0 1px rgba(0,0,0,0.35)"></div>
<div class="t" style="left:1104.74px;top:687.64px;font-size:12px;color:#000;transform:scaleX(0.8681);transform-origin:0 0;">Multi-Layer</div>
<div class="a" style="left:1238px;top:684px;width:65px;height:19px;background:#f0f0f0;border:1px solid #d6d6d6"></div>
<div class="a" style="left:1303px;top:684px;width:35px;height:19px;background:#f0f0f0;border:1px solid #d6d6d6"></div>
<div class="t" style="left:1242.47px;top:687.32px;font-size:12.5px;color:#606060;transform:scaleX(0.8982);transform-origin:0 0;">Mask Level</div>
<div class="t" style="left:1308.20px;top:687.32px;font-size:12.5px;color:#606060;transform:scaleX(0.8017);transform-origin:0 0;">Clear</div>
<div class="t" style="left:4.16px;top:710.04px;font-size:12px;color:#000;transform:scaleX(0.8811);transform-origin:0 0;">X:1200mil Y:50mil</div>
<div class="t" style="left:99.99px;top:710.04px;font-size:12px;color:#000;transform:scaleX(0.8521);transform-origin:0 0;">Grid:5mil</div>
<div class="t" style="left:151.34px;top:710.04px;font-size:12px;color:#000;transform:scaleX(0.8804);transform-origin:0 0;">(Electrical Grid)</div>
<div class="a" style="left:347px;top:708px;width:1px;height:18px;background:#a8a8a8"></div>
<div class="a" style="left:695px;top:708px;width:1px;height:18px;background:#a8a8a8"></div>
<div class="a" style="left:970px;top:708px;width:77px;height:18px;background:#f4f4f4;border:1px solid #d8d8d8"></div>
<div class="a" style="left:1046px;top:708px;width:49px;height:18px;background:#f4f4f4;border:1px solid #d8d8d8"></div>
<div class="a" style="left:1094px;top:708px;width:91px;height:18px;background:#f4f4f4;border:1px solid #d8d8d8"></div>
<div class="a" style="left:1184px;top:708px;width:44px;height:18px;background:#f4f4f4;border:1px solid #d8d8d8"></div>
<div class="a" style="left:1227px;top:708px;width:69px;height:18px;background:#f4f4f4;border:1px solid #d8d8d8"></div>
<div class="a" style="left:1295px;top:708px;width:45px;height:18px;background:#f4f4f4;border:1px solid #d8d8d8"></div>
<div class="a" style="left:1344px;top:708px;width:18px;height:18px;background:#f4f4f4;border:1px solid #d8d8d8"></div>
<div class="t" style="left:973.53px;top:710.44px;font-size:12px;color:#555555;transform:scaleX(0.8755);transform-origin:0 0;">Signal Integrity</div>
<div class="t" style="left:1053.93px;top:710.44px;font-size:12px;color:#555555;transform:scaleX(0.8715);transform-origin:0 0;">System</div>
<div class="t" style="left:1101.14px;top:710.44px;font-size:12px;color:#555555;transform:scaleX(0.8682);transform-origin:0 0;">Design Compiler</div>
<div class="t" style="left:1194.05px;top:710.44px;font-size:12px;color:#555555;transform:scaleX(0.9616);transform-origin:0 0;">Help</div>
<div class="t" style="left:1234.01px;top:710.44px;font-size:12px;color:#555555;transform:scaleX(0.8893);transform-origin:0 0;">Instruments</div>
<div class="t" style="left:1306.12px;top:710.44px;font-size:12px;color:#555555;transform:scaleX(0.8843);transform-origin:0 0;">PCB</div>
<div class="t" style="left:1346.45px;top:710.44px;font-size:12px;color:#555555;transform:scaleX(0.9190);transform-origin:0 0;">&gt;&gt;</div>
<div class="a" style="left:1054px;top:722px;width:7px;height:1px;background:#555"></div>
<div class="a" style="left:1102px;top:722px;width:8px;height:1px;background:#555"></div>
<div class="a" style="left:1195px;top:722px;width:8px;height:1px;background:#555"></div>
<div class="a" style="left:1235px;top:722px;width:2px;height:1px;background:#555"></div>
<div class="a" style="left:1307px;top:722px;width:7px;height:1px;background:#555"></div>
<div class="a" style="left:0;top:728px;width:1366px;height:40px;background:#5d7c98"></div>
<svg class="a" style="left:0;top:728px" width="1366" height="40">
<path d="M12 9l11 -1.5v11h-11zM24.5 7.3l13 -1.8v13h-13zM12 19.5h11v11l-11 -1.5zM24.5 19.5h13v13l-13 -1.8z" fill="#ffffff"/>
<rect x="50" y="7.0" width="2" height="2" fill="#2e4560"/>
<rect x="53" y="7.0" width="2" height="2" fill="#2e4560"/>
<rect x="56" y="7.0" width="2" height="2" fill="#2e4560"/>
<rect x="50" y="10.5" width="2" height="2" fill="#2e4560"/>
<rect x="53" y="10.5" width="2" height="2" fill="#2e4560"/>
<rect x="56" y="10.5" width="2" height="2" fill="#2e4560"/>
<rect x="50" y="14.0" width="2" height="2" fill="#2e4560"/>
<rect x="53" y="14.0" width="2" height="2" fill="#2e4560"/>
<rect x="56" y="14.0" width="2" height="2" fill="#2e4560"/>
<rect x="50" y="17.5" width="2" height="2" fill="#2e4560"/>
<rect x="53" y="17.5" width="2" height="2" fill="#2e4560"/>
<rect x="56" y="17.5" width="2" height="2" fill="#2e4560"/>
<rect x="50" y="21.0" width="2" height="2" fill="#2e4560"/>
<rect x="53" y="21.0" width="2" height="2" fill="#2e4560"/>
<rect x="56" y="21.0" width="2" height="2" fill="#2e4560"/>
<rect x="50" y="24.5" width="2" height="2" fill="#2e4560"/>
<rect x="53" y="24.5" width="2" height="2" fill="#2e4560"/>
<rect x="56" y="24.5" width="2" height="2" fill="#2e4560"/>
<rect x="50" y="28.0" width="2" height="2" fill="#2e4560"/>
<rect x="53" y="28.0" width="2" height="2" fill="#2e4560"/>
<rect x="56" y="28.0" width="2" height="2" fill="#2e4560"/>
<rect x="50" y="31.5" width="2" height="2" fill="#2e4560"/>
<rect x="53" y="31.5" width="2" height="2" fill="#2e4560"/>
<rect x="56" y="31.5" width="2" height="2" fill="#2e4560"/>
<rect x="68.5" y="1.5" width="57" height="37" fill="#6f8aa5" stroke="#8aa0b6"/>
<rect x="130.5" y="1.5" width="57" height="37" fill="#6f8aa5" stroke="#8aa0b6"/>
<rect x="192.5" y="1.5" width="57" height="37" fill="#6f8aa5" stroke="#8aa0b6"/>
<rect x="378.5" y="1.5" width="57" height="37" fill="#a3acb4" stroke="#e8eef2"/>
<rect x="440.5" y="1.5" width="57" height="37" fill="#6f8aa5" stroke="#8aa0b6"/>
<path d="M81 9h13l2 2h16v23h-31z" fill="#e6c878" stroke="#c8a050" stroke-width="0.6"/><path d="M83 8h9v4h-9zM90 10h10v4h-10zM97 12h12v4h-12z" fill="#fafafa" stroke="#d0d0d0" stroke-width="0.5"/><rect x="84.5" y="8.5" width="3" height="2.5" fill="#38a838"/><rect x="93" y="10.5" width="3" height="2.5" fill="#d83030"/><rect x="100" y="12.5" width="3" height="2.5" fill="#3090d8"/><path d="M81 15h31v19h-31z" fill="#f6e6a8" stroke="#d8b868" stroke-width="0.6"/><path d="M85 35v-10.5q0 -1.5 1.5 -1.5h20q1.5 0 1.5 1.5v10.5h-5v-6.5h-13v6.5z" fill="#8ccff4" stroke="#4a9ad8" stroke-width="0.9"/>
<defs><linearGradient id="kmy" x1="0" y1="0" x2="1" y2="0"><stop offset="0" stop-color="#a8a010"/><stop offset="0.6" stop-color="#e8e820"/><stop offset="1" stop-color="#f0f040"/></linearGradient><linearGradient id="kmp" x1="0" y1="0" x2="1" y2="1"><stop offset="0" stop-color="#c0b0f0"/><stop offset="1" stop-color="#4020a0"/></linearGradient></defs><rect x="131" y="2" width="16.5" height="36" fill="url(#kmy)"/><path d="M143.5 7l22 13.5 -22 13.5z" fill="url(#kmp)" stroke="#402080" stroke-width="0.6"/><path d="M175 7v27l-14 -13.5z" fill="#e4dcf0" stroke="#8070a8" stroke-width="0.6"/>
<defs><radialGradient id="ffb" cx="0.4" cy="0.3" r="0.7"><stop offset="0" stop-color="#60b8f0"/><stop offset="1" stop-color="#1c3c90"/></radialGradient></defs><circle cx="221" cy="19.7" r="14.5" fill="#e85818"/><circle cx="223.5" cy="17.5" r="10.5" fill="url(#ffb)"/><path d="M207 17q1 -8 8 -11q-4 5 -2 9q3 -3 7 -1q-3 2 -3 6q1 6 8 7q6 0 9 -5q-1 10 -12 12q-13 0 -15 -17z" fill="#f07020"/><path d="M210 24q4 8 12 8q-7 -3 -9 -9z" fill="#f8b030"/>
<defs><linearGradient id="shg" x1="0" y1="0" x2="1" y2="1"><stop offset="0" stop-color="#a8d0f4"/><stop offset="1" stop-color="#3c86d0"/></linearGradient></defs><path d="M269.5 6q7 -2.5 13.5 -3q7 0.5 13.5 3v15q-1.5 9 -13.5 14.5q-12 -5.5 -13.5 -14.5z" fill="url(#shg)" stroke="#2f6cb0" stroke-width="0.8"/><path d="M288 12.5A7.5 7.5 0 1 0 288 25" fill="none" stroke="#98c838" stroke-width="2.6"/>
<text x="329.5" y="21" font-family="Liberation Sans" font-weight="bold" font-style="italic" font-size="21.5" fill="#f41010" stroke="#801010" stroke-width="0.5" textLength="31" lengthAdjust="spacingAndGlyphs">CV</text><text x="329.5" y="32.6" font-family="Liberation Sans" font-weight="bold" font-size="15.5" fill="#f41010" stroke="#801010" stroke-width="0.5" textLength="31" lengthAdjust="spacingAndGlyphs">AVR</text>
<path d="M392 26L404 10L422 15L413 32z" fill="#dcdce0" stroke="#f4f4f6" stroke-width="0.8"/><path d="M392 23L404 7L422 12L413 29z" fill="#c8c8cc" stroke="#ffffff" stroke-width="0.8"/><path d="M391 20L403.5 4L422 9L412.7 25.8z" fill="#1e2444" stroke="#8890b0" stroke-width="0.7"/><path d="M404 10l7 1.5 -2.5 6 -7 -1.5z" fill="#f0a060"/><rect x="394" y="13" width="2" height="3" fill="#d08850"/>
<path d="M455 26q-2 -9 8 -14q10 -4 17 2q3 4 -1 9q-4 5 -10 6q-4 1 -6 -2q-2 -2 -4 1q-3 2 -4 -2z" fill="#c4ddf0" stroke="#9ac0dc" stroke-width="0.8"/><circle cx="458.5" cy="20.5" r="2.4" fill="#e03838"/><circle cx="463.5" cy="15" r="2.4" fill="#48b038"/><circle cx="470" cy="12.5" r="2.4" fill="#e8c028"/><circle cx="466" cy="23.5" r="2" fill="#6f8aa5"/><path d="M468.5 35L481 11" stroke="#d88830" stroke-width="2.6" stroke-linecap="round"/><path d="M480 12l2 -7 4 2z" fill="#e0b070"/>
<rect x="1068" y="5.0" width="2" height="2" fill="#2e4560"/>
<rect x="1071" y="5.0" width="2" height="2" fill="#2e4560"/>
<rect x="1074" y="5.0" width="2" height="2" fill="#2e4560"/>
<rect x="1068" y="8.5" width="2" height="2" fill="#2e4560"/>
<rect x="1071" y="8.5" width="2" height="2" fill="#2e4560"/>
<rect x="1074" y="8.5" width="2" height="2" fill="#2e4560"/>
<rect x="1068" y="12.0" width="2" height="2" fill="#2e4560"/>
<rect x="1071" y="12.0" width="2" height="2" fill="#2e4560"/>
<rect x="1074" y="12.0" width="2" height="2" fill="#2e4560"/>
<rect x="1068" y="15.5" width="2" height="2" fill="#2e4560"/>
<rect x="1071" y="15.5" width="2" height="2" fill="#2e4560"/>
<rect x="1074" y="15.5" width="2" height="2" fill="#2e4560"/>
<rect x="1068" y="19.0" width="2" height="2" fill="#2e4560"/>
<rect x="1071" y="19.0" width="2" height="2" fill="#2e4560"/>
<rect x="1074" y="19.0" width="2" height="2" fill="#2e4560"/>
<rect x="1068" y="22.5" width="2" height="2" fill="#2e4560"/>
<rect x="1071" y="22.5" width="2" height="2" fill="#2e4560"/>
<rect x="1074" y="22.5" width="2" height="2" fill="#2e4560"/>
<rect x="1068" y="26.0" width="2" height="2" fill="#2e4560"/>
<rect x="1071" y="26.0" width="2" height="2" fill="#2e4560"/>
<rect x="1074" y="26.0" width="2" height="2" fill="#2e4560"/>
<rect x="1068" y="29.5" width="2" height="2" fill="#2e4560"/>
<rect x="1071" y="29.5" width="2" height="2" fill="#2e4560"/>
<rect x="1074" y="29.5" width="2" height="2" fill="#2e4560"/>
<rect x="1068" y="33.0" width="2" height="2" fill="#2e4560"/>
<rect x="1071" y="33.0" width="2" height="2" fill="#2e4560"/>
<rect x="1074" y="33.0" width="2" height="2" fill="#2e4560"/>
<rect x="1089" y="12" width="30" height="17" rx="2" fill="none" stroke="#ffffff" stroke-width="2"/>
<rect x="1093" y="15.5" width="2.5" height="2" fill="#ffffff"/>
<rect x="1097" y="15.5" width="2.5" height="2" fill="#ffffff"/>
<rect x="1101" y="15.5" width="2.5" height="2" fill="#ffffff"/>
<rect x="1105" y="15.5" width="2.5" height="2" fill="#ffffff"/>
<rect x="1109" y="15.5" width="2.5" height="2" fill="#ffffff"/>
<rect x="1113" y="15.5" width="2.5" height="2" fill="#ffffff"/>
<rect x="1093" y="19.0" width="2.5" height="2" fill="#ffffff"/>
<rect x="1097" y="19.0" width="2.5" height="2" fill="#ffffff"/>
<rect x="1101" y="19.0" width="2.5" height="2" fill="#ffffff"/>
<rect x="1105" y="19.0" width="2.5" height="2" fill="#ffffff"/>
<rect x="1109" y="19.0" width="2.5" height="2" fill="#ffffff"/>
<rect x="1113" y="19.0" width="2.5" height="2" fill="#ffffff"/>
<rect x="1093" y="22.5" width="2.5" height="2" fill="#ffffff"/>
<rect x="1097" y="22.5" width="2.5" height="2" fill="#ffffff"/>
<rect x="1101" y="22.5" width="2.5" height="2" fill="#ffffff"/>
<rect x="1105" y="22.5" width="2.5" height="2" fill="#ffffff"/>
<rect x="1109" y="22.5" width="2.5" height="2" fill="#ffffff"/>
<rect x="1113" y="22.5" width="2.5" height="2" fill="#ffffff"/>
<path d="M1132 23l4 -4 4 4z" fill="#ffffff"/>
<path d="M1154 11v18M1154 12h10l-2 3 2 3h-10" fill="none" stroke="#ffffff" stroke-width="1.5"/><circle cx="1164" cy="26" r="4" fill="#e02020" stroke="#fff"/>
<path d="M1179 12v6h5v-6M1181 18v10" stroke="#fff" stroke-width="1.5" fill="none"/><rect x="1185.5" y="13.5" width="6" height="14" fill="none" stroke="#fff" stroke-width="1.5"/>
<path d="M1201 26h2v-2h-2zM1204 26h2v-4h-2zM1207 26h2v-6h-2zM1210 26h2v-9h-2zM1213 26h2.5v-12h-2.5z" fill="#ffffff"/>
<path d="M1226 17h3l5 -5v18l-5 -5h-3z" fill="#fff"/><path d="M1236 16q3 5 0 10M1239 13q5 8 0 16" stroke="#fff" fill="none" stroke-width="1.3"/>
<g stroke="#f4f8fc" stroke-width="1.35" fill="none" stroke-linecap="round"><path d="M1325.3 16.8H1334.2M1327.6 8.2V16.8M1327.6 16.8q0.5 -5.5 3.8 -5.3q3 0.3 2.8 5.3"/><path d="M1339.6 15q-0.3 4.8 3.6 4.8q3.8 0 3.3 -6.2q-0.3 -2.4 -2.2 -2.4q-1.8 0 -1.8 1.8q0 1.8 2.6 1.8"/><path d="M1296.9 34V26.1H1301.3M1307.5 25.6V34M1310.2 33.6q-1.2 -8 2.5 -8q3.6 0 2.6 8zM1316.5 34.2L1320.6 25.4M1326.4 34L1329.2 25.6L1332 34M1333.3 34.2L1337.3 25.4M1339 34V26.1H1343.2M1345.8 25.6V34"/></g><g fill="#f4f8fc"><circle cx="1331.4" cy="10.6" r="0.9"/><circle cx="1336.5" cy="16.3" r="0.95"/><circle cx="1342.4" cy="10.2" r="0.8"/><circle cx="1345" cy="10.2" r="0.8"/><circle cx="1303.4" cy="30.6" r="1.15"/><circle cx="1323.7" cy="30.6" r="1.15"/></g>
</svg>
<div class="t" style="left:1254.80px;top:742.64px;font-size:12px;color:#ffffff;transform:scaleX(0.9080);transform-origin:0 0;">ENG</div>
<div class="t" style="left:1294.36px;top:734.74px;font-size:12px;color:#ffffff;transform:scaleX(0.9210);transform-origin:0 0;">01:00</div>
</body></html>
